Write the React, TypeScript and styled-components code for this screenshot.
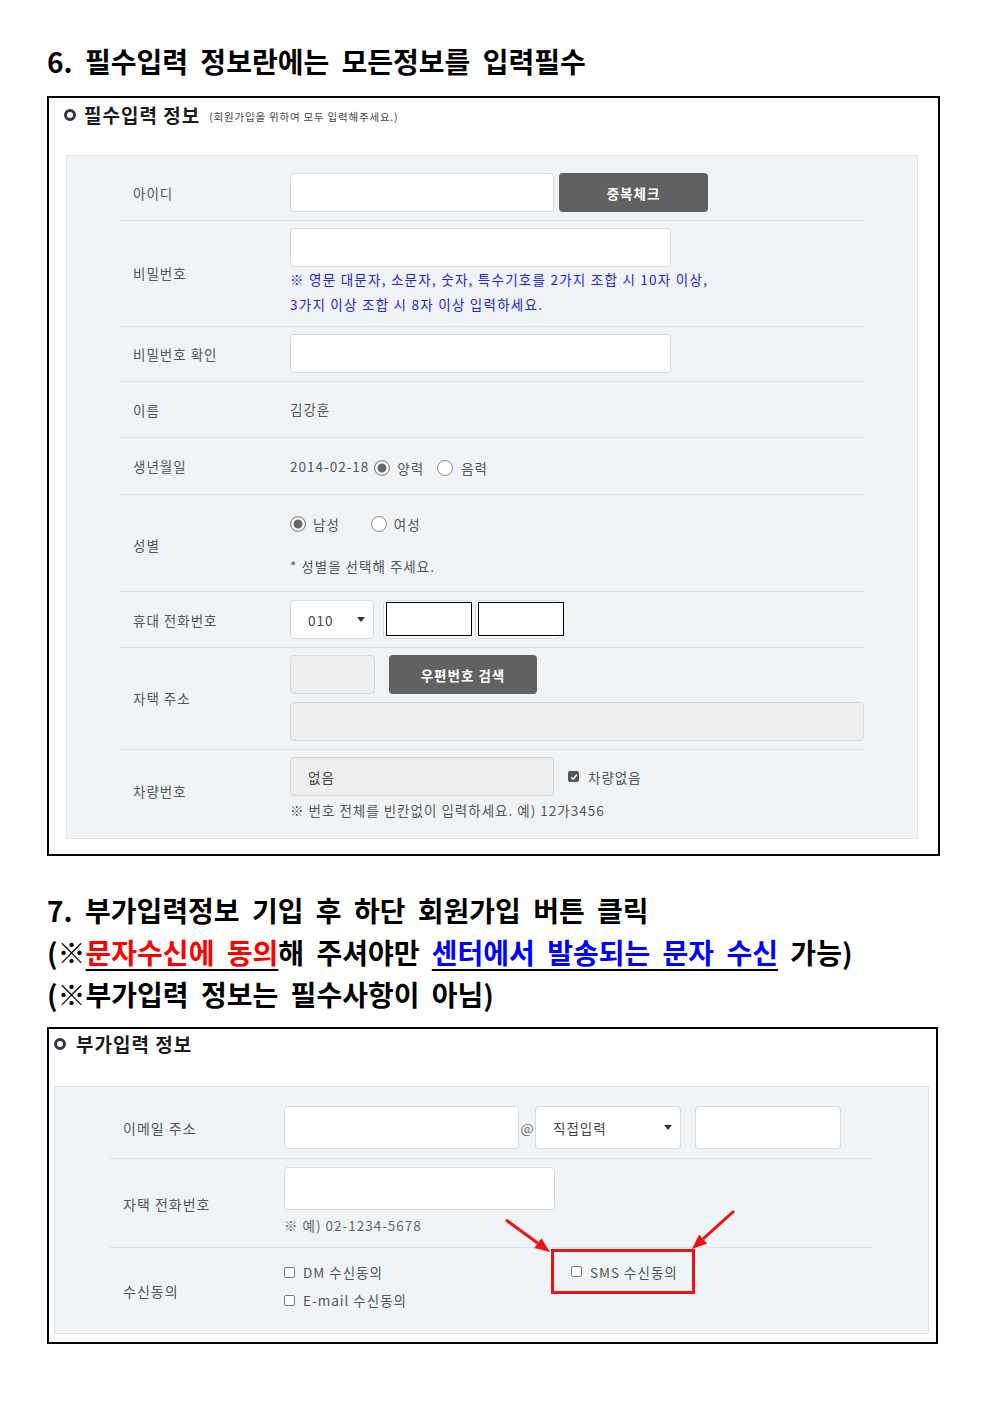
import * as React from 'react'
import styled, { createGlobalStyle } from 'styled-components'

const formFont = `"Noto Sans CJK KR", "Noto Sans", sans-serif`

const GlobalStyle = createGlobalStyle`
    html, body {
        margin: 0;
        padding: 0;
        background: #fff;
    }
    body {
        font-family: ${formFont};
    }
`

const Page = styled.div`
    width: 992px;
    min-height: 1403px;
    box-sizing: border-box;
    padding: 40px 0 0 47px;
`

const Heading = styled.div<{ $mt?: number }>`
    margin-top: ${(p) => p.$mt ?? 0}px;
    font-family: "Noto Sans CJK KR", sans-serif;
    font-size: 28px;
    font-weight: 700;
    line-height: 42px;
    color: #000;
    word-spacing: 6px;
    white-space: nowrap;
`

const Mark = styled.span<{ $color: string }>`
    color: ${(p) => p.$color};
    text-decoration: underline;
    text-decoration-color: #000;
    text-decoration-thickness: 2px;
    text-underline-offset: 5px;
`

const Sheet = styled.div<{ $w: number; $mt: number }>`
    width: ${(p) => p.$w}px;
    margin-top: ${(p) => p.$mt}px;
    box-sizing: border-box;
    border: 2px solid #000;
    display: flex;
    flex-direction: column;
`

const SheetHeader = styled.div<{ $pl: number; $pt: number; $gap: number }>`
    height: 57px;
    box-sizing: border-box;
    padding: ${(p) => p.$pt}px 0 0 ${(p) => p.$pl}px;
    display: flex;
    align-items: flex-start;
    gap: ${(p) => p.$gap}px;
    line-height: 22px;
`

const Ring = styled.span`
    width: 12px;
    height: 12px;
    box-sizing: border-box;
    border: 3px solid #34363f;
    border-radius: 50%;
    margin-top: 5px;
    flex: none;
`

const SheetTitle = styled.span`
    font-size: 19px;
    font-weight: 700;
    color: #1a1a1a;
    letter-spacing: 1px;
`

const SheetSub = styled.span`
    font-size: 10.5px;
    color: #444;
    letter-spacing: 0.8px;
    margin-left: 1px;
    padding-top: 2px;
`

const Panel = styled.div<{ $ml: number; $mr: number; $mb: number; $pl: number; $pr: number }>`
    position: relative;
    margin: 0 ${(p) => p.$mr}px ${(p) => p.$mb}px ${(p) => p.$ml}px;
    padding: 10px ${(p) => p.$pr}px 0 ${(p) => p.$pl}px;
    background: #f0f4f7;
    border: 1px solid #dfe4e8;
`

const Row = styled.div<{ $label: number; $pt?: number; $pb?: number; $h?: number }>`
    display: grid;
    grid-template-columns: ${(p) => p.$label}px 1fr;
    padding: ${(p) => p.$pt ?? 0}px 0 ${(p) => p.$pb ?? 0}px;
    min-height: ${(p) => p.$h ?? 0}px;
    border-bottom: 1px solid #dde2e6;
    &:last-of-type {
        border-bottom: none;
    }
`

const Label = styled.div<{ $size: number }>`
    align-self: center;
    padding-left: 13px;
    font-size: ${(p) => p.$size}px;
    letter-spacing: 1px;
    color: #555;
`

const Field = styled.div<{ $gap?: number }>`
    display: flex;
    flex-direction: column;
    gap: ${(p) => p.$gap ?? 0}px;
    font-size: 13.5px;
    letter-spacing: 1px;
    color: #555;
`

const Line = styled.div<{ $gap?: number; $lh?: number }>`
    display: flex;
    align-items: center;
    gap: ${(p) => p.$gap ?? 0}px;
    line-height: ${(p) => p.$lh ?? 20}px;
    min-height: ${(p) => p.$lh ?? 20}px;
`

const Input = styled.div<{ $w: number; $h?: number; $fill?: boolean }>`
    width: ${(p) => p.$w}px;
    height: ${(p) => p.$h ?? 39}px;
    box-sizing: border-box;
    flex: none;
    border: 1px solid #d6dadf;
    border-radius: 4px;
    background: ${(p) => (p.$fill ? '#efefef' : '#fff')};
    display: flex;
    align-items: center;
    padding-left: 17px;
    font-size: 13.5px;
    letter-spacing: 1px;
    color: #444;
`

const Select = styled(Input)`
    justify-content: space-between;
    padding-right: 8px;
    &::after {
        content: '';
        border-left: 4px solid transparent;
        border-right: 4px solid transparent;
        border-top: 5px solid #333;
    }
`

const Framed = styled.div`
    width: 86px;
    height: 39px;
    box-sizing: border-box;
    flex: none;
    border: 1px solid #d6dadf;
    border-radius: 4px;
    background: #fff;
    padding: 1px 0 0 2px;
    display: flex;
`

const FramedInner = styled.div`
    flex: none;
    width: 86px;
    height: 34px;
    box-sizing: border-box;
    border: 1.5px solid #000;
    background: #fff;
`

const DarkButton = styled.button<{ $w: number }>`
    width: ${(p) => p.$w}px;
    height: 39px;
    flex: none;
    border: none;
    border-radius: 4px;
    background: #616161;
    color: #fff;
    font-family: ${formFont};
    font-size: 13.5px;
    font-weight: 700;
    letter-spacing: 1px;
    padding: 0;
`

const Hint = styled.div<{ $color?: string; $lh: number; $ls?: number }>`
    color: ${(p) => p.$color ?? '#555'};
    line-height: ${(p) => p.$lh}px;
    letter-spacing: ${(p) => p.$ls ?? 1}px;
    font-size: 13.5px;
`

const Radio = styled.span<{ $on?: boolean }>`
    width: 16px;
    height: 16px;
    box-sizing: border-box;
    flex: none;
    border-radius: 50%;
    border: 1px solid #8a8a8a;
    background: ${(p) => (p.$on ? '#676767' : '#fff')};
    box-shadow: ${(p) => (p.$on ? 'inset 0 0 0 2.5px #fff' : 'none')};
`

const Option = styled.span<{ $gap: number; $after?: number; $drop?: number }>`
    display: inline-flex;
    align-items: center;
    gap: ${(p) => p.$gap}px;
    line-height: 20px;
    margin-right: ${(p) => p.$after ?? 0}px;
    margin-top: ${(p) => (p.$drop ?? 0) * 2}px;
`

const Check = styled.span<{ $on?: boolean }>`
    width: 11px;
    height: 11px;
    box-sizing: border-box;
    flex: none;
    border-radius: 2px;
    border: 1px solid ${(p) => (p.$on ? '#555' : '#7a7a7a')};
    background: ${(p) => (p.$on ? '#555' : '#fff')};
    display: inline-flex;
    align-items: center;
    justify-content: center;
`

const ConsentWrap = styled.div`
    display: flex;
    align-items: flex-start;
`

const ConsentCol = styled.div`
    width: 267px;
    padding: 10px 0 19px;
`

const Highlight = styled.div`
    margin-top: 1px;
    width: 144px;
    height: 45px;
    box-sizing: border-box;
    border: 3px solid #ee1111;
    padding-left: 17px;
    display: flex;
    align-items: center;
`

const At = styled.span`
    width: 16px;
    text-align: center;
    color: #777;
    font-size: 14px;
    letter-spacing: 0;
`

const ArrowLayer = styled.svg`
    position: absolute;
    left: 0;
    top: 0;
    pointer-events: none;
    overflow: visible;
`

const CheckMark = () => (
    <svg width="8" height="8" viewBox="0 0 8 8">
        <path d="M1.2 4.2 L3.2 6.1 L6.8 1.8" fill="none" stroke="#fff" strokeWidth="1.5" />
    </svg>
)

const Arrow: React.FC<{ x1: number; y1: number; x2: number; y2: number }> = ({ x1, y1, x2, y2 }) => {
    const a = Math.atan2(y2 - y1, x2 - x1)
    const len = 15
    const half = 6
    const bx = x2 - len * Math.cos(a)
    const by = y2 - len * Math.sin(a)
    const px = -Math.sin(a) * half
    const py = Math.cos(a) * half
    return (
        <g>
            <line x1={x1} y1={y1} x2={bx} y2={by} stroke="#ee1111" strokeWidth="3" />
            <polygon points={`${x2},${y2} ${bx + px},${by + py} ${bx - px},${by - py}`} fill="#ee1111" />
        </g>
    )
}

const App: React.FC = () => {
    return (
        <>
            <GlobalStyle />
            <Page>
                <Heading>6. 필수입력 정보란에는 모든정보를 입력필수</Heading>

                <Sheet $w={893} $mt={14}>
                    <SheetHeader $pl={15} $pt={6} $gap={8}>
                        <Ring />
                        <SheetTitle>필수입력 정보</SheetTitle>
                        <SheetSub>(회원가입을 위하여 모두 입력해주세요.)</SheetSub>
                    </SheetHeader>
                    <Panel $ml={17} $mr={20} $mb={15} $pl={53} $pr={53}>
                        <Row $label={170} $pt={7} $pb={8}>
                            <Label $size={13.5}>아이디</Label>
                            <Field>
                                <Line $gap={5}>
                                    <Input $w={264} />
                                    <DarkButton $w={149}>중복체크</DarkButton>
                                </Line>
                            </Field>
                        </Row>
                        <Row $label={170} $pt={7} $pb={9}>
                            <Label $size={13.5}>비밀번호</Label>
                            <Field>
                                <Input $w={381} />
                                <Hint $color="#2323e6" $lh={25} $ls={1.25}>
                                    ※ 영문 대문자, 소문자, 숫자, 특수기호를 2가지 조합 시 10자 이상,
                                    <br />
                                    3가지 이상 조합 시 8자 이상 입력하세요.
                                </Hint>
                            </Field>
                        </Row>
                        <Row $label={170} $pt={7} $pb={8}>
                            <Label $size={13.5}>비밀번호 확인</Label>
                            <Field>
                                <Input $w={381} />
                            </Field>
                        </Row>
                        <Row $label={170} $h={55}>
                            <Label $size={13.5}>이름</Label>
                            <Field>
                                <Line $lh={55}>김강훈</Line>
                            </Field>
                        </Row>
                        <Row $label={170} $h={56}>
                            <Label $size={13.5}>생년월일</Label>
                            <Field>
                                <Line $lh={56} $gap={5}>
                                    <span>2014-02-18</span>
                                    <Option $gap={7} $after={8} $drop={2}>
                                        <Radio $on />
                                        <span>양력</span>
                                    </Option>
                                    <Option $gap={8} $drop={2}>
                                        <Radio />
                                        <span>음력</span>
                                    </Option>
                                </Line>
                            </Field>
                        </Row>
                        <Row $label={170} $pt={15} $pb={11}>
                            <Label $size={13.5}>성별</Label>
                            <Field $gap={14}>
                                <Line $lh={28}>
                                    <Option $gap={7} $after={31}>
                                        <Radio $on />
                                        <span>남성</span>
                                    </Option>
                                    <Option $gap={7}>
                                        <Radio />
                                        <span>여성</span>
                                    </Option>
                                </Line>
                                <Hint $lh={28}>* 성별을 선택해 주세요.</Hint>
                            </Field>
                        </Row>
                        <Row $label={170} $pt={8} $pb={8}>
                            <Label $size={13.5}>휴대 전화번호</Label>
                            <Field>
                                <Line $gap={6}>
                                    <Select $w={84} style={{ marginRight: 3 }}>
                                        010
                                    </Select>
                                    <Framed>
                                        <FramedInner />
                                    </Framed>
                                    <Framed>
                                        <FramedInner />
                                    </Framed>
                                </Line>
                            </Field>
                        </Row>
                        <Row $label={170} $pt={7} $pb={8}>
                            <Label $size={13.5}>자택 주소</Label>
                            <Field $gap={8}>
                                <Line $gap={14}>
                                    <Input $w={85} $fill />
                                    <DarkButton $w={148}>우편번호 검색</DarkButton>
                                </Line>
                                <Input $w={574} $fill />
                            </Field>
                        </Row>
                        <Row $label={170} $pt={7} $pb={14}>
                            <Label $size={13.5}>차량번호</Label>
                            <Field>
                                <Line $gap={14}>
                                    <Input $w={264} $fill>
                                        없음
                                    </Input>
                                    <Option $gap={9}>
                                        <Check $on>
                                            <CheckMark />
                                        </Check>
                                        <span>차량없음</span>
                                    </Option>
                                </Line>
                                <Hint $lh={28}>※ 번호 전체를 빈칸없이 입력하세요. 예) 12가3456</Hint>
                            </Field>
                        </Row>
                    </Panel>
                </Sheet>

                <Heading $mt={33}>
                    7. 부가입력정보 기입 후 하단 회원가입 버튼 클릭
                    <br />
                    (※<Mark $color="#ff0000">문자수신에 동의</Mark>해 주셔야만{' '}
                    <Mark $color="#0000ff">센터에서 발송되는 문자 수신</Mark> 가능)
                    <br />
                    (※부가입력 정보는 필수사항이 아님)
                </Heading>

                <Sheet $w={891} $mt={12}>
                    <SheetHeader $pl={5} $pt={4} $gap={10}>
                        <Ring />
                        <SheetTitle>부가입력 정보</SheetTitle>
                    </SheetHeader>
                    <Panel $ml={5} $mr={7} $mb={8} $pl={55} $pr={56}>
                        <Row $label={174} $pt={9} $pb={9}>
                            <Label $size={14}>이메일 주소</Label>
                            <Field>
                                <Line>
                                    <Input $w={235} $h={43} />
                                    <At>@</At>
                                    <Select $w={146} $h={43}>
                                        직접입력
                                    </Select>
                                    <Input $w={146} $h={43} style={{ marginLeft: 14 }} />
                                </Line>
                            </Field>
                        </Row>
                        <Row $label={174} $pt={8} $pb={7}>
                            <Label $size={14}>자택 전화번호</Label>
                            <Field>
                                <Input $w={271} $h={43} />
                                <Hint $lh={30} $color="#666">
                                    ※ 예) 02-1234-5678
                                </Hint>
                            </Field>
                        </Row>
                        <Row $label={174}>
                            <Label $size={14}>수신동의</Label>
                            <Field>
                                <ConsentWrap>
                                    <ConsentCol>
                                        <Line $lh={28}>
                                            <Option $gap={8}>
                                                <Check />
                                                <span>DM 수신동의</span>
                                            </Option>
                                        </Line>
                                        <Line $lh={28}>
                                            <Option $gap={8}>
                                                <Check />
                                                <span>E-mail 수신동의</span>
                                            </Option>
                                        </Line>
                                    </ConsentCol>
                                    <Highlight>
                                        <Option $gap={8}>
                                            <Check />
                                            <span>SMS 수신동의</span>
                                        </Option>
                                    </Highlight>
                                </ConsentWrap>
                            </Field>
                        </Row>
                        <ArrowLayer width="875" height="246">
                            <Arrow x1={451} y1={133} x2={495} y2={165} />
                            <Arrow x1={679} y1={124} x2={637} y2={162} />
                        </ArrowLayer>
                    </Panel>
                </Sheet>
            </Page>
        </>
    )
}

export default App
